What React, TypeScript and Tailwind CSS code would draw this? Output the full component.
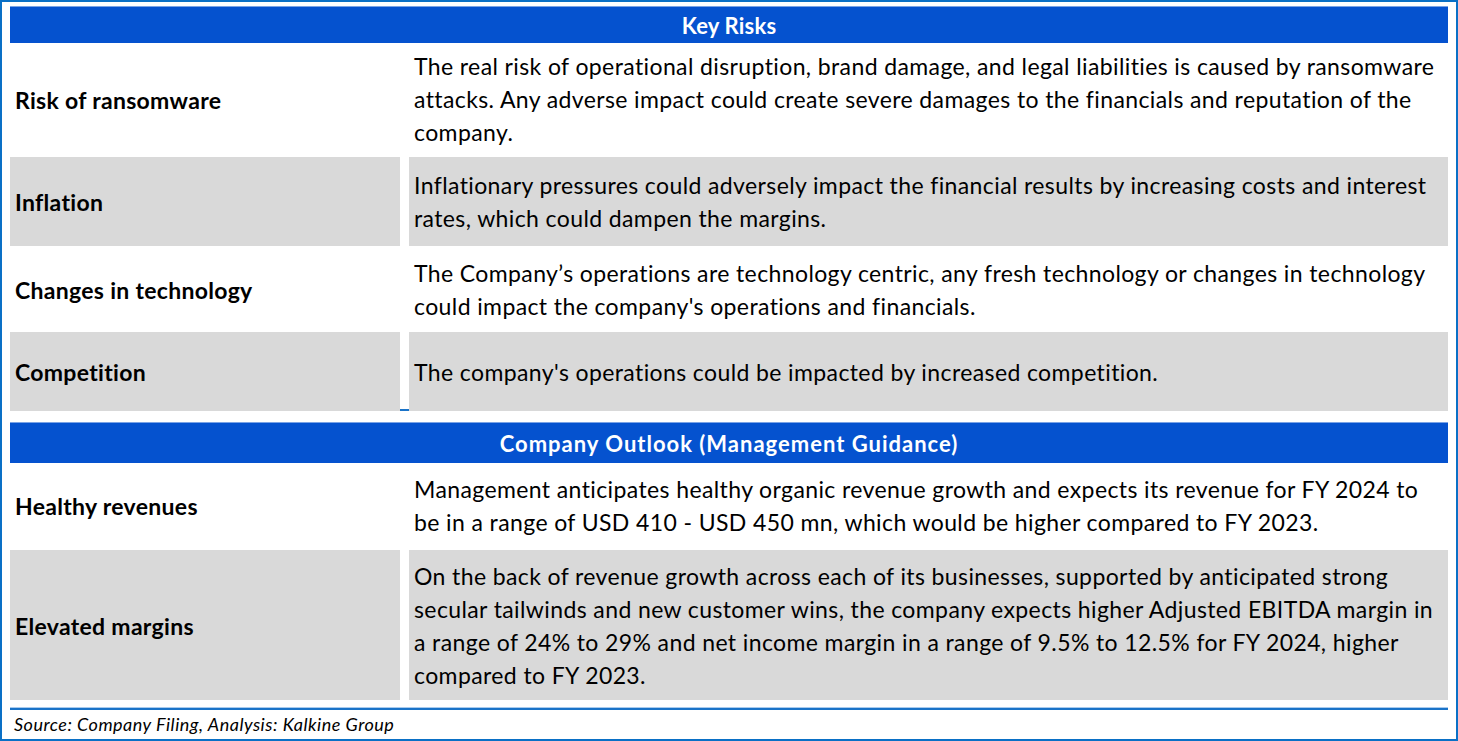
import React from "react";

type Row = {
  label: string;
  lines: string[];
  gray: boolean;
  h: string;
  tick?: boolean;
};

const risks: Row[] = [
  {
    label: "Risk of ransomware",
    lines: [
      "The real risk of operational disruption, brand damage, and legal liabilities is caused by ransomware",
      "attacks. Any adverse impact could create severe damages to the financials and reputation of the",
      "company.",
    ],
    gray: false,
    h: "h-[112px]",
  },
  {
    label: "Inflation",
    lines: [
      "Inflationary pressures could adversely impact the financial results by increasing costs and interest",
      "rates, which could dampen the margins.",
    ],
    gray: true,
    h: "h-[89px]",
  },
  {
    label: "Changes in technology",
    lines: [
      "The Company\u2019s operations are technology centric, any fresh technology or changes in technology",
      "could impact the company's operations and financials.",
    ],
    gray: false,
    h: "h-[82px]",
  },
  {
    label: "Competition",
    lines: ["The company's operations could be impacted by increased competition."],
    gray: true,
    h: "h-[79px]",
    tick: true,
  },
];

const outlook: Row[] = [
  {
    label: "Healthy revenues",
    lines: [
      "Management anticipates healthy organic revenue growth and expects its revenue for FY 2024 to",
      "be in a range of USD 410 - USD 450 mn, which would be higher compared to FY 2023.",
    ],
    gray: false,
    h: "h-[85px]",
  },
  {
    label: "Elevated margins",
    lines: [
      "On the back of revenue growth across each of its businesses, supported by anticipated strong",
      "secular tailwinds and new customer wins, the company expects higher Adjusted EBITDA margin in",
      "a range of 24% to 29% and net income margin in a range of 9.5% to 12.5% for FY 2024, higher",
      "compared to FY 2023.",
    ],
    gray: true,
    h: "h-[150px]",
  },
];

const TableRow = ({ row }: { row: Row }) => {
  const bg = row.gray ? "bg-[#d9d9d9]" : "bg-white";
  return (
    <div className={`flex ${row.h}`}>
      <div className={`w-[390px] flex items-center pl-[5px] pt-[2px] ${bg}`}>
        <span className="text-[23px] tracking-[0.3px] font-bold text-black whitespace-nowrap">{row.label}</span>
      </div>
      <div className="w-[9px] flex items-end">
        {row.tick && <div className="w-full h-[2px] bg-[#1a73c8]"></div>}
      </div>
      <div className={`flex-1 flex items-center pl-[5px] pt-[1px] ${bg}`}>
        <p className="text-[23px] leading-[33px] tracking-[0.39px] text-black whitespace-nowrap">
          {row.lines.map((l, i) => (
            <React.Fragment key={i}>
              {l}
              {i < row.lines.length - 1 && <br />}
            </React.Fragment>
          ))}
        </p>
      </div>
    </div>
  );
};

const Header = ({ title, h, track }: { title: string; h: string; track: string }) => (
  <div className={`${h} bg-[#0552cf] flex items-center justify-center border-t border-[#7aa3e6]`}>
    <span className={`text-white font-bold text-[22px] ${track}`}>{title}</span>
  </div>
);

export default function App() {
  return (
    <div
      className="w-[1458px] h-[741px] bg-white border-2 border-[#0a70c6] flex flex-col px-[8px] pt-[4px]"
      style={{ fontFamily: "Lato, 'Open Sans', sans-serif" }}
    >
      <Header title="Key Risks" h="h-[37px]" track="tracking-[0.2px]" />
      <div className="flex flex-col gap-[2px]">
        {risks.map((r) => (
          <TableRow key={r.label} row={r} />
        ))}
      </div>
      <div className="h-[11px]"></div>
      <Header title="Company Outlook (Management Guidance)" h="h-[41px]" track="tracking-[1px]" />
      <div className="flex flex-col gap-[2px]">
        {outlook.map((r) => (
          <TableRow key={r.label} row={r} />
        ))}
      </div>
      <div className="h-[7px]"></div>
      <div className="h-[3px] border-t border-[#a9cbee] bg-[#1a73c8]"></div>
      <div className="flex-1 flex items-center pl-[4px]">
        <span className="italic text-[18px] tracking-[0.5px] text-black">Source: Company Filing, Analysis: Kalkine Group</span>
      </div>
    </div>
  );
}
